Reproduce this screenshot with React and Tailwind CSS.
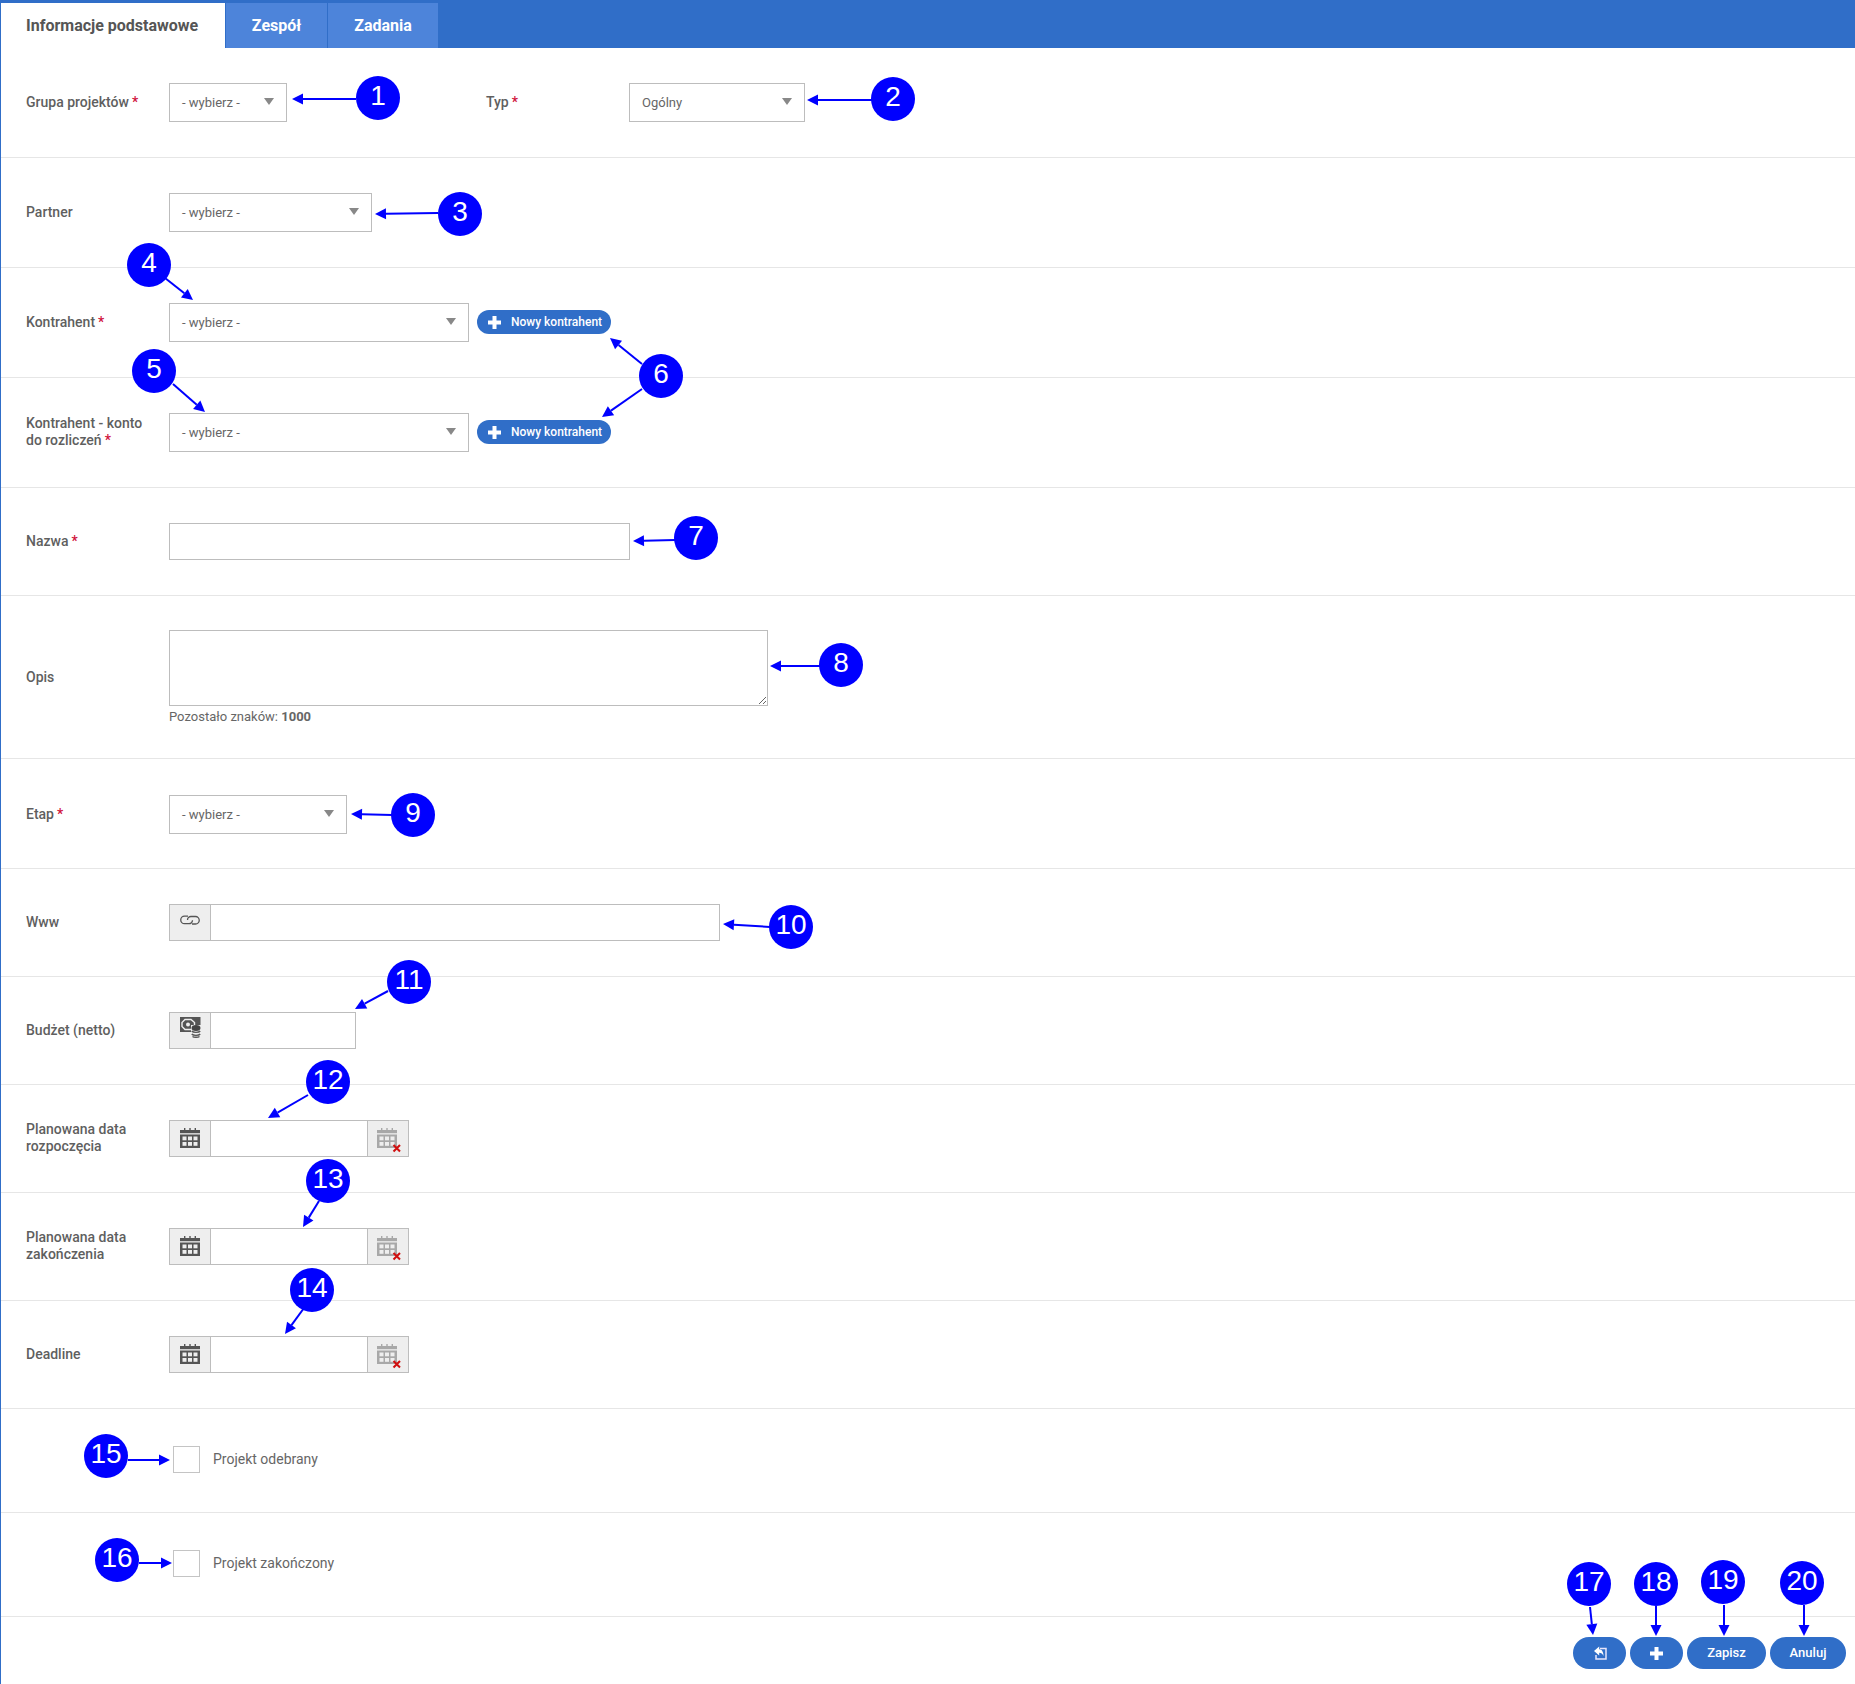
import React from 'react';

const font = { fontFamily: 'Roboto, "Noto Sans", sans-serif' };

// numbered callouts drawn over the form
const badges = [
  [1, 378, 98], [2, 893, 99], [3, 460, 214], [4, 149, 265], [5, 154, 371],
  [6, 661, 376], [7, 696, 538], [8, 841, 665], [9, 413, 815], [10, 791, 927],
  [11, 409, 982], [12, 328, 1082], [13, 328, 1181], [14, 312, 1290], [15, 106, 1456],
  [16, 117, 1560], [17, 1589, 1584], [18, 1656, 1584], [19, 1723, 1582], [20, 1802, 1583],
];

const arrows = [
  [356, 99, 292, 99], [872, 100, 807, 100], [438, 213, 375, 214], [165, 278, 193, 300],
  [173, 384, 205, 412], [642, 364, 610, 338], [642, 389, 602, 417], [675, 540, 633, 541],
  [820, 666, 770, 666], [392, 815, 351, 814], [770, 927, 723, 924], [388, 991, 355, 1009],
  [308, 1095, 268, 1118], [319, 1201, 303, 1227], [304, 1308, 285, 1334], [128, 1460, 170, 1460],
  [139, 1563, 172, 1563], [1590, 1607, 1593, 1635], [1656, 1606, 1656, 1636],
  [1724, 1605, 1724, 1636], [1804, 1605, 1804, 1636],
];

const Arrow = ({ from }) => {
  const [x1, y1, x2, y2] = from;
  const len = Math.hypot(x2 - x1, y2 - y1);
  const ux = (x2 - x1) / len;
  const uy = (y2 - y1) / len;
  const bx = x2 - ux * 11;
  const by = y2 - uy * 11;
  const pts = `${x2},${y2} ${bx - uy * 5.5},${by + ux * 5.5} ${bx + uy * 5.5},${by - ux * 5.5}`;
  return (
    <g fill="#0000ff" stroke="#0000ff">
      <line x1={x1} y1={y1} x2={bx} y2={by} strokeWidth="2" />
      <polygon points={pts} strokeWidth="0" />
    </g>
  );
};

const Label = ({ children, req, two }) => (
  <div className={`w-[125px] mr-[18px] shrink-0 text-[14px] leading-[17px] font-medium text-[#5f5f5f] ${two ? 'mb-[2px]' : ''}`}>
    {children}
    {req && <span className="ml-[3px] text-[#d0103a]">*</span>}
  </div>
);

const Row = ({ className, children }) => (
  <div className={`flex items-center pl-[25px] border-b border-[#e6e6e6] ${className}`}>{children}</div>
);

const Select = ({ className, text = '- wybierz -' }) => (
  <div className={`flex items-center justify-between h-[39px] pl-[12px] pr-[12px] border border-[#bdbdbd] bg-white text-[13px] text-[#666] ${className}`}>
    <span>{text}</span>
    <span className="w-0 h-0 border-l-[5px] border-r-[5px] border-t-[7px] border-l-transparent border-r-transparent border-t-[#888] mb-[2px]" />
  </div>
);

const PlusIcon = () => (
  <svg width="13" height="13" viewBox="0 0 13 13" fill="#fff">
    <path d="M4.500 0h4V4.500h4.500v4H8.500V13h-4V8.500H0v-4h4.500z" />
  </svg>
);

const NewButton = () => (
  <button className="flex items-center ml-[8px] mb-[1px] w-[134px] h-[24px] pl-[11px] rounded-full bg-[#306ec8] text-white text-[12px] font-medium">
    <PlusIcon />
    <span className="ml-[10px]">Nowy kontrahent</span>
  </button>
);

const Addon = ({ side, children }) => (
  <div className={`flex items-center justify-center w-[41px] h-full shrink-0 bg-[#eeeeee] border-[#bdbdbd] ${side === 'left' ? 'border-r' : 'border-l'}`}>
    {children}
  </div>
);

const LinkIcon = () => (
  <svg width="20" height="10" viewBox="0 0 20 10" fill="none" stroke="#555" strokeWidth="1.3" className="mb-[6px]">
    <path d="M12.500 5.200a3.500 3.500 0 0 1-3.500 3.500H4.500a3.700 3.700 0 0 1 0-7.500H8" />
    <path d="M7.500 5a3.500 3.500 0 0 1 3.500-3.500h4.500a3.700 3.700 0 0 1 0 7.500H12" />
  </svg>
);

const BudgetIcon = () => (
  <svg width="21" height="21" viewBox="0 0 21 21" className="mb-[6px]">
    <rect x="0" y="0" width="20.500" height="15" fill="#555" />
    <path d="M5 2.500h6l3.500 3v4l-3.500 3H5L2 9.500v-4z" fill="none" stroke="#eee" strokeWidth="1.400" />
    <circle cx="8" cy="7.500" r="2" fill="#eee" />
    <rect x="11" y="8" width="10" height="13" fill="#eee" />
    <ellipse cx="16" cy="11" rx="4.500" ry="3" fill="#444" />
    <path d="M11.800 14c1.200 1.800 7.200 1.800 8.400 0M11.800 17c1.200 1.800 7.200 1.800 8.400 0M12.500 19.500c1.200 1 5.800 1 7 0" fill="none" stroke="#555" strokeWidth="1.400" />
  </svg>
);

const CalIcon = ({ color = '#555', clear }) => (
  <svg width="24" height="25" viewBox="0 0 24 25" className={clear ? 'ml-[2px] mt-[4px]' : 'ml-[4px] mt-[4px]'}>
    <g fill={color}>
      <rect x="4" y="0" width="1.400" height="2.500" />
      <rect x="9.300" y="0" width="1.400" height="2.500" />
      <rect x="14.600" y="0" width="1.400" height="2.500" />
      <rect x="0" y="2" width="20" height="3.200" />
      <rect x="0" y="6.500" width="20" height="13.500" />
    </g>
    <g fill="#eee">
      <rect x="2.500" y="8.500" width="4" height="3.800" />
      <rect x="8" y="8.500" width="4" height="3.800" />
      <rect x="13.500" y="8.500" width="4" height="3.800" />
      <rect x="2.500" y="14" width="4" height="3.800" />
      <rect x="8" y="14" width="4" height="3.800" />
      <rect x="13.500" y="14" width="4" height="3.800" />
    </g>
    {clear && <path d="M16.500 17l6.500 6.500M23 17l-6.500 6.500" stroke="#d01010" strokeWidth="2.100" />}
  </svg>
);

const BackIcon = () => (
  <svg width="14" height="14" viewBox="0 0 14 14">
    <path d="M7 2.500H13V13H3V9" fill="none" stroke="#e8e6fb" strokeWidth="1.500" />
    <path d="M1 5L6.200 0.500V3.200C9 3.200 10.500 6 10.500 10C9.500 8 8.200 6.800 6.200 6.800V9.500z" fill="#fff" />
  </svg>
);

const DateField = () => (
  <div className="flex h-[37px] w-[240px] border border-[#bdbdbd]">
    <Addon side="left"><CalIcon /></Addon>
    <input className="flex-1 min-w-0 outline-none" />
    <Addon side="right"><CalIcon color="#a8a8a8" clear /></Addon>
  </div>
);

const Check = ({ label }) => (
  <div className="flex items-center ml-[147px] mb-[3px]">
    <div className="w-[27px] h-[27px] border border-[#c4c4c4] bg-white" />
    <span className="ml-[13px] text-[14px] text-[#666]">{label}</span>
  </div>
);

const Tab = ({ className, children }) => (
  <div className={`flex items-center justify-center h-[45px] text-white text-[16px] font-bold bg-[#4d84da] ${className}`}>
    {children}
  </div>
);

const FootBtn = ({ className, children }) => (
  <button className={`flex items-center justify-center h-[32px] rounded-full bg-[#306ec8] text-white text-[13px] font-medium ${className}`}>
    {children}
  </button>
);

export default function App() {
  return (
    <div className="relative min-h-[1684px] bg-white border-l border-[#306ec8]" style={font}>
      <div className="flex items-end gap-[1px] h-[48px] bg-[#306ec8]">
        <div className="flex items-center h-[45px] w-[224px] pl-[25px] bg-white text-[#555] text-[16px] font-bold">
          Informacje podstawowe
        </div>
        <Tab className="w-[101px]">Zespół</Tab>
        <Tab className="w-[110px]">Zadania</Tab>
      </div>

      <Row className="h-[110px]">
        <div className="flex items-center w-[460px]">
          <Label req>Grupa projektów</Label>
          <Select className="w-[118px]" />
        </div>
        <Label req>Typ</Label>
        <Select className="w-[176px]" text="Ogólny" />
      </Row>

      <Row className="h-[110px]">
        <Label>Partner</Label>
        <Select className="w-[203px]" />
      </Row>

      <Row className="h-[110px]">
        <Label req>Kontrahent</Label>
        <Select className="w-[300px]" />
        <NewButton />
      </Row>

      <Row className="h-[110px]">
        <Label req two>Kontrahent - konto do rozliczeń</Label>
        <Select className="w-[300px]" />
        <NewButton />
      </Row>

      <Row className="h-[108px]">
        <Label req>Nazwa</Label>
        <input className="w-[461px] h-[37px] border border-[#bdbdbd] outline-none" />
      </Row>

      <Row className="h-[163px]">
        <Label>Opis</Label>
        <div className="mt-[2px]">
          <textarea className="block w-[599px] h-[76px] border border-[#bdbdbd] outline-none" />
          <div className="mt-[2px] text-[13px] leading-[18px] text-[#666]">
            Pozostało znaków: <b className="font-bold">1000</b>
          </div>
        </div>
      </Row>

      <Row className="h-[110px] pt-[2px]">
        <Label req>Etap</Label>
        <Select className="w-[178px]" />
      </Row>

      <Row className="h-[108px]">
        <Label>Www</Label>
        <div className="flex h-[37px] w-[551px] border border-[#bdbdbd]">
          <Addon side="left"><LinkIcon /></Addon>
          <input className="flex-1 min-w-0 outline-none" />
        </div>
      </Row>

      <Row className="h-[108px]">
        <Label>Budżet (netto)</Label>
        <div className="flex h-[37px] w-[187px] border border-[#bdbdbd]">
          <Addon side="left"><BudgetIcon /></Addon>
          <input className="flex-1 min-w-0 outline-none" />
        </div>
      </Row>

      <Row className="h-[108px]">
        <Label two>Planowana data rozpoczęcia</Label>
        <DateField />
      </Row>

      <Row className="h-[108px]">
        <Label two>Planowana data zakończenia</Label>
        <DateField />
      </Row>

      <Row className="h-[108px]">
        <Label>Deadline</Label>
        <DateField />
      </Row>

      <Row className="h-[104px]">
        <Check label="Projekt odebrany" />
      </Row>

      <Row className="h-[104px]">
        <Check label="Projekt zakończony" />
      </Row>

      <div className="flex justify-end gap-[4px] pt-[20px] pr-[9px] h-[67px]">
        <FootBtn className="w-[53px]"><BackIcon /></FootBtn>
        <FootBtn className="w-[53px]"><PlusIcon /></FootBtn>
        <FootBtn className="w-[79px]">Zapisz</FootBtn>
        <FootBtn className="w-[76px]">Anuluj</FootBtn>
      </div>

      {/* callouts */}
      <svg className="absolute top-0 left-[-1px] w-[1855px] h-[1684px] pointer-events-none">
        {arrows.map((a, i) => <Arrow key={i} from={a} />)}
      </svg>
      {badges.map(([n, x, y]) => (
        <div
          key={n}
          className="absolute flex items-center justify-center w-[44px] h-[44px] pb-[4px] rounded-full bg-[#0000ff] text-white text-[28px] leading-none"
          style={{ left: x - 23, top: y - 22, fontFamily: '"Liberation Sans", Arial, sans-serif' }}
        >
          {n}
        </div>
      ))}
    </div>
  );
}
